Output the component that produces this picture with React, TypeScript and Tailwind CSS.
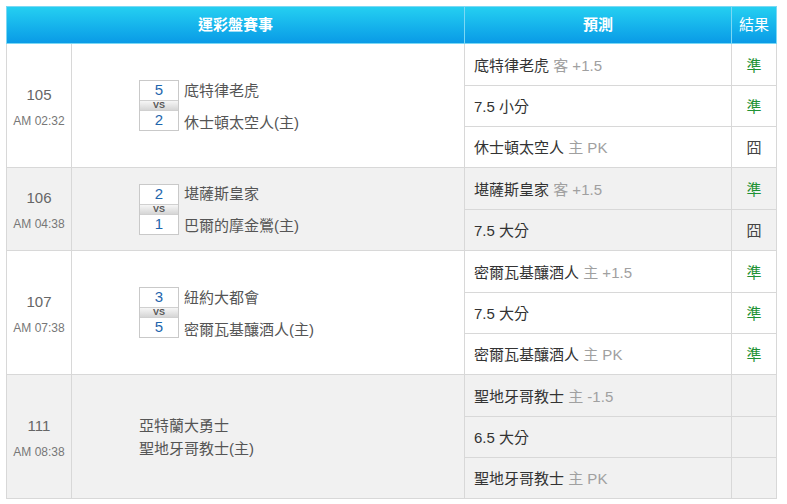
import React from "react";

type Pred = { main: string; extra?: string; result?: "準" | "囧" | "" };
type Game = {
  no: string;
  time: string;
  away: string;
  home: string;
  scores?: [string, string];
  preds: Pred[];
  alt: boolean;
};

const games: Game[] = [
  {
    no: "105",
    time: "AM 02:32",
    away: "底特律老虎",
    home: "休士頓太空人(主)",
    scores: ["5", "2"],
    alt: false,
    preds: [
      { main: "底特律老虎", extra: "客 +1.5", result: "準" },
      { main: "7.5 小分", result: "準" },
      { main: "休士頓太空人", extra: "主 PK", result: "囧" },
    ],
  },
  {
    no: "106",
    time: "AM 04:38",
    away: "堪薩斯皇家",
    home: "巴爾的摩金鶯(主)",
    scores: ["2", "1"],
    alt: true,
    preds: [
      { main: "堪薩斯皇家", extra: "客 +1.5", result: "準" },
      { main: "7.5 大分", result: "囧" },
    ],
  },
  {
    no: "107",
    time: "AM 07:38",
    away: "紐約大都會",
    home: "密爾瓦基釀酒人(主)",
    scores: ["3", "5"],
    alt: false,
    preds: [
      { main: "密爾瓦基釀酒人", extra: "主 +1.5", result: "準" },
      { main: "7.5 大分", result: "準" },
      { main: "密爾瓦基釀酒人", extra: "主 PK", result: "準" },
    ],
  },
  {
    no: "111",
    time: "AM 08:38",
    away: "亞特蘭大勇士",
    home: "聖地牙哥教士(主)",
    alt: true,
    preds: [
      { main: "聖地牙哥教士", extra: "主 -1.5", result: "" },
      { main: "6.5 大分", result: "" },
      { main: "聖地牙哥教士", extra: "主 PK", result: "" },
    ],
  },
];

const font = { fontFamily: '"Liberation Sans", "Noto Sans CJK TC", sans-serif' };

function Matchup({ g }: { g: Game }) {
  if (!g.scores) {
    return (
      <div className="pl-[67px] text-[15px] leading-[23px] text-[#555]">
        <div>{g.away}</div>
        <div>{g.home}</div>
      </div>
    );
  }
  return (
    <div className="pl-[67px] flex items-start">
      <div className="w-[40px] border border-[#c9c9c9] flex flex-col">
        <div className="h-[19px] flex items-center justify-center text-[15px] text-[#1f66ad] bg-white">
          {g.scores[0]}
        </div>
        <div className="h-[11px] flex items-center justify-center text-[9px] font-bold leading-none text-[#555] bg-gradient-to-b from-[#f6f6f6] to-[#d6d6d6] border-y border-[#d0d0d0]">
          VS
        </div>
        <div className="h-[19px] flex items-center justify-center text-[15px] text-[#1f66ad] bg-white">
          {g.scores[1]}
        </div>
      </div>
      <div className="h-[51px] flex flex-col pl-[5px] pt-[1px] text-[15px] text-[#555]">
        <div className="h-[20px] flex items-center whitespace-nowrap">{g.away}</div>
        <div className="h-[20px] mt-[12px] flex items-center whitespace-nowrap">{g.home}</div>
      </div>
    </div>
  );
}

export default function App() {
  return (
    <div className="bg-white w-[787px] h-[504px] pt-[6px] pl-[6px]" style={font}>
      <table className="table-fixed border-collapse w-[770px]">
        <colgroup>
          <col className="w-[65px]" />
          <col className="w-[393px]" />
          <col className="w-[267px]" />
          <col className="w-[45px]" />
        </colgroup>
        <thead>
          <tr className="bg-gradient-to-b from-[#25cff1] to-[#0a99e6] h-[37px]">
            <th colSpan={2} className="border border-[#7bd8f4] text-white text-[15px] font-bold p-0">
              運彩盤賽事
            </th>
            <th className="border border-[#7bd8f4] text-white text-[15px] font-bold p-0">預測</th>
            <th className="border border-[#7bd8f4] text-white text-[15px] font-normal p-0">結果</th>
          </tr>
        </thead>
        <tbody>
          {games.map((g) =>
            g.preds.map((p, i) => (
              <tr key={g.no + i} className={g.alt ? "bg-[#f1f1f1]" : "bg-white"}>
                {i === 0 && (
                  <>
                    <td
                      rowSpan={g.preds.length}
                      className="border border-[#d8d8d8] text-center align-middle p-0 pt-[2px]"
                    >
                      <div className="text-[15px] text-[#666] leading-[20px]">{g.no}</div>
                      <div className="text-[12px] text-[#777] leading-[16px] mt-[8px]">{g.time}</div>
                    </td>
                    <td rowSpan={g.preds.length} className="border border-[#d8d8d8] align-middle p-0">
                      <Matchup g={g} />
                    </td>
                  </>
                )}
                <td
                  className={
                    "border border-[#d8d8d8] pl-[9px] pt-[3px] text-[15px] text-[#333] whitespace-nowrap " +
                    (i === 0 ? "h-[42px]" : "h-[41px]")
                  }
                >
                  {p.main}
                  {p.extra && <span className="text-[#a0a0a0]"> {p.extra}</span>}
                </td>
                <td
                  className={
                    "border border-[#d8d8d8] text-center pt-[3px] text-[15px] " +
                    (p.result === "準" ? "text-[#1f9235]" : "text-[#444]")
                  }
                >
                  {p.result}
                </td>
              </tr>
            ))
          )}
        </tbody>
      </table>
    </div>
  );
}
